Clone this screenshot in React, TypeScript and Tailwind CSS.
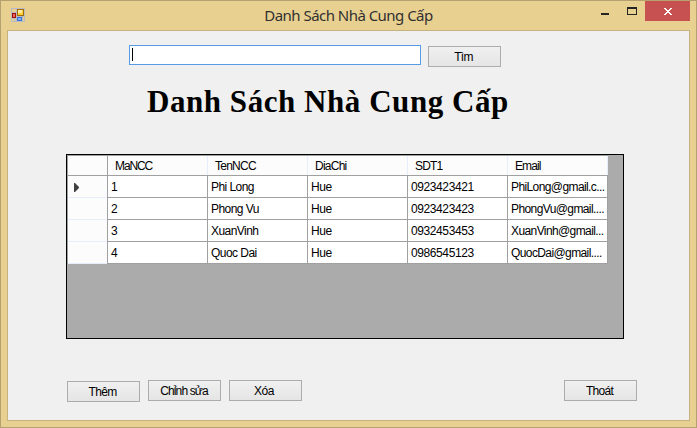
const rows = [
  ["1", "Phi Long", "Hue", "0923423421", "PhiLong@gmail.c..."],
  ["2", "Phong Vu", "Hue", "0923423423", "PhongVu@gmail...."],
  ["3", "XuanVinh", "Hue", "0932453453", "XuanVinh@gmail..."],
  ["4", "Quoc Dai", "Hue", "0986545123", "QuocDai@gmail...."],
];
const cellTracking = [
  "tracking-normal",
  "tracking-[-0.55px]",
  "tracking-[-0.4px]",
  "tracking-[-0.4px]",
  "tracking-[-0.6px]",
];
const headers = [
  { name: "MaNCC", tracking: "tracking-[-1.1px]" },
  { name: "TenNCC", tracking: "tracking-[-0.75px]" },
  { name: "DiaChi", tracking: "tracking-[-0.75px]" },
  { name: "SDT1", tracking: "tracking-[-0.8px]" },
  { name: "Email", tracking: "tracking-[-0.9px]" },
];

function Button({ children, className = "" }: { children: string; className?: string }) {
  return (
    <button
      className={`flex h-[21px] w-[73px] shrink-0 items-center justify-center border border-[#acacac] bg-linear-to-b from-[#f0f0f0] to-[#e5e5e5] text-[12px] leading-none ${className}`}
    >
      {children}
    </button>
  );
}

function FormIcon() {
  return (
    <svg className="mt-[7px] ml-[10px] size-[14px]" viewBox="0 0 14 14" shapeRendering="crispEdges">
      <path d="M0 0h14v14H0z" fill="#b9bbc2" />
      <path d="M1 1h4v3H1zM1 11h2v2H1zM4 11h1v2H4zM12 9h1v4h-1z" fill="#e8d090" />
      <path d="M6 1h7v7H6z" fill="#a06d08" />
      <path d="M7 2h5v5H7z" fill="#fbcf36" />
      <path d="M7 2h4v3H7z" fill="#ffeaa0" />
      <path d="M1 5h4v5H1z" fill="#9e1212" />
      <path d="M2 6h2v3H2z" fill="#f0625a" />
      <path d="M6 9h5v4H6z" fill="#3c74d8" />
      <path d="M7 10h3v2H7z" fill="#80b0f8" />
    </svg>
  );
}

export default function App() {
  return (
    <div className="flex h-[428px] w-[697px] flex-col border border-[#b4a16f] bg-[#e8d090] font-['Liberation_Sans',Arial,sans-serif] text-[12px] text-black">
      <header className="flex h-[29px] shrink-0">
        <div className="w-[200px]">
          <FormIcon />
        </div>
        <h1 className="flex-1 pt-[4px] text-center font-['Noto_Sans',sans-serif] text-[15px] leading-[20px] tracking-[-0.53px] text-[#303030]">
          Danh Sách Nhà Cung Cấp
        </h1>
        <div className="flex w-[200px] justify-end pr-[6px]">
          <svg className="h-[20px] w-[90px]" viewBox="0 0 90 20" shapeRendering="crispEdges">
            <path d="M1 12h8v2H1z" fill="#252525" />
            <path d="M27 6h10v8H27zM28 8v5h8V8z" fillRule="evenodd" fill="#252525" />
            <path d="M45 0h45v20H45z" fill="#c75050" />
            <path
              d="M64 7h2v1h-2zM70 7h2v1h-2zM65 8h2v1h-2zM69 8h2v1h-2zM66 9h4v1h-4zM67 10h2v1h-2zM66 11h4v1h-4zM65 12h2v1h-2zM69 12h2v1h-2zM64 13h2v1h-2zM70 13h2v1h-2z"
              fill="#fff"
            />
          </svg>
        </div>
      </header>
      <main className="mx-[6px] flex h-[391px] shrink-0 flex-col border border-[#c7b17d] bg-[#f0f0f0]">
        <div className="flex pt-[14px] pl-[121px]">
          <div className="h-[20px] w-[292px] border border-[#569de5] bg-white pt-[2px] pl-[2px]">
            <div className="h-[13px] w-px bg-black" />
          </div>
          <Button className="mt-px ml-[7px] pr-[2px] tracking-[-0.7px]">Tìm</Button>
        </div>
        <h2 className="mt-[16px] mb-px ml-[139px] h-[38px] font-['Liberation_Serif',serif] text-[31px] leading-[38px] font-bold tracking-[0.55px] whitespace-nowrap">
          Danh Sách Nhà Cung Cấp
        </h2>
        <section className="mt-[32px] ml-[58px] h-[185px] w-[558px] border border-black bg-[#ababab]">
          <div className="flex h-[21px] w-[541px] border-t border-b border-l border-[#a0a0a0]">
            <div className="w-[39px] bg-[#fcfcfc]" />
            <div className="w-px bg-[#a0a0a0]" />
            {headers.map((h) => (
              <div key={h.name} className={`w-[100px] border-r border-[#e5effb] bg-[#fcfcfc] pl-[7px] leading-[20px] ${h.tracking}`}>
                {h.name}
              </div>
            ))}
          </div>
          {rows.map((row, i) => (
            <div key={row[0]} className="flex h-[22px] w-[541px] border-l border-[#a0a0a0]">
              <div className="flex w-[39px] items-center border-b border-[#e5effb] bg-[#fcfcfc] pt-px pl-[6px]">
                {i === 0 && (
                  <svg className="h-[9px] w-[5px]" viewBox="0 0 5 9">
                    <path d="M0 0h1L5 4v1L1 9H0z" fill="#404040" />
                  </svg>
                )}
              </div>
              <div className="w-px bg-[#a0a0a0]" />
              {row.map((cell, j) => (
                <div key={j} className={`w-[100px] border-r border-b border-[#a0a0a0] bg-white pl-[3px] leading-[22px] whitespace-nowrap ${cellTracking[j]}`}>
                  {cell}
                </div>
              ))}
            </div>
          ))}
        </section>
        <footer className="mt-[41px] flex pl-[59px]">
          <Button className="mt-px pr-[2px] tracking-[-0.7px]">Thêm</Button>
          <Button className="ml-[8px] pr-px tracking-[-0.85px]">Chỉnh sửa</Button>
          <Button className="ml-[8px] pr-[3px] tracking-[-0.5px]">Xóa</Button>
          <Button className="ml-[262px] pr-[2px] tracking-[-0.7px]">Thoát</Button>
        </footer>
      </main>
    </div>
  );
}
